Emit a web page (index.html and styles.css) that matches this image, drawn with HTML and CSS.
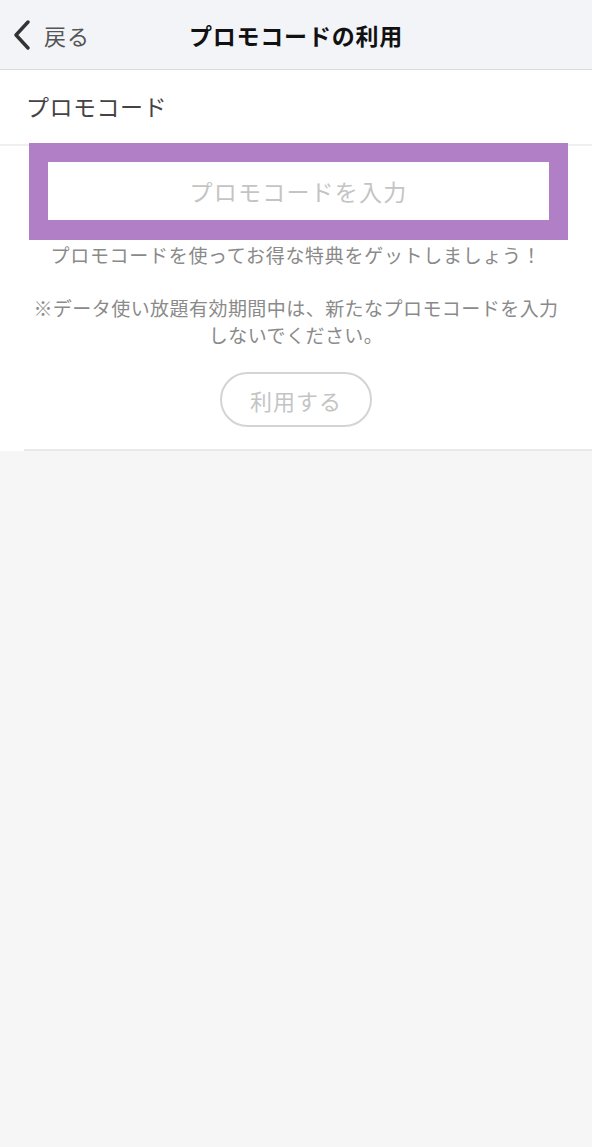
FILE: index.html
```html
<!DOCTYPE html>
<html lang="ja">
<head>
    <meta charset="UTF-8">
    <meta name="viewport" content="width=device-width, initial-scale=1.0">
    <title>プロモコードの利用</title>
    <link rel="stylesheet" href="styles.css">
</head>
<body>
    <header class="nav">
        <a class="back" href="#">
            <svg class="chevron" width="20" height="30" viewBox="0 0 20 30">
                <polyline points="16,2 4,15 16,28" fill="none" stroke="#333" stroke-width="3.4" stroke-linecap="round" stroke-linejoin="round"/>
            </svg>
            <span>戻る</span>
        </a>
        <h1 class="title">プロモコードの利用</h1>
        <div></div>
    </header>

    <section class="promo">
        <div class="label">プロモコード</div>

        <div class="field">
            <input type="text" class="code" placeholder="プロモコードを入力">
        </div>

        <p class="lead">プロモコードを使ってお得な特典をゲットしましょう！</p>
        <p class="note">※データ使い放題有効期間中は、新たなプロモコードを入力<br>しないでください。</p>

        <div class="actions">
            <button type="button" class="use" disabled>利用する</button>
        </div>
        <div class="rule"></div>
    </section>
</body>
</html>
```

FILE: styles.css
```css
body {
    font-family: "Noto Sans CJK JP", "Noto Sans", sans-serif;
    margin: 0;
    padding: 0;
    background-color: #f6f6f7;
    min-height: 1147px;
}

.nav {
    display: grid;
    grid-template-columns: 1fr auto 1fr;
    align-items: center;
    height: 69px;
    background-color: #f3f4f8;
    border-bottom: 1px solid #dcdcdf;
}

.back {
    display: flex;
    align-items: center;
    padding-left: 12px;
    color: #555;
    text-decoration: none;
    font-size: 22px;
    letter-spacing: 1px;
}

.chevron {
    margin-right: 12px;
}

.title {
    margin: 0;
    font-size: 23px;
    font-weight: bold;
    color: #111;
    letter-spacing: 0.8px;
}

.promo {
    background-color: #fff;
}

.label {
    height: 74px;
    line-height: 72px;
    padding-left: 26px;
    font-size: 23px;
    color: #444;
    letter-spacing: 0.5px;
    border-bottom: 2px solid #efeff1;
}

.field {
    margin: -3px 24px 0 29px;
    border: 19px solid #b07fc6;
    border-bottom-width: 20px;
    background-color: #fff;
}

.code {
    display: block;
    width: 100%;
    height: 58px;
    border: none;
    outline: none;
    padding: 0;
    box-sizing: border-box;
    text-align: center;
    font-family: inherit;
    font-size: 23px;
    letter-spacing: 1.2px;
}

.code::placeholder {
    color: #c4c4c4;
}

.lead,
.note {
    margin: 0;
    text-align: center;
    color: #8a8a8a;
    font-size: 19px;
    line-height: 27px;
}

.lead {
    margin-top: 1px;
    letter-spacing: 0.7px;
}

.note {
    margin-top: 26px;
    letter-spacing: 0.45px;
}

.actions {
    display: flex;
    justify-content: center;
    padding: 24px 0 22px;
}

.use {
    width: 152px;
    height: 55px;
    border: 2px solid #d4d4d4;
    border-radius: 28px;
    background-color: #fff;
    color: #c4c4c4;
    font-family: inherit;
    font-size: 22px;
    letter-spacing: 1px;
}

.rule {
    margin-left: 24px;
    border-bottom: 2px solid #e9e9eb;
}
```
